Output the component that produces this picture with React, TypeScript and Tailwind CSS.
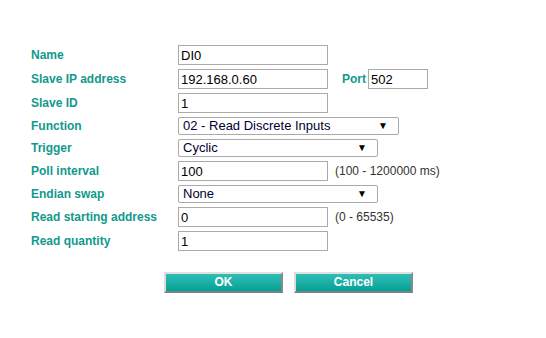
import React from "react";

const labelCls = "w-[147px] shrink-0 text-[12px] font-bold text-[#11998c]";
const inputCls =
  "h-[20px] border border-[#a9a9a9] bg-white px-[2px] text-[13px] text-black outline-none";

function TextRow({ label, value, hint }: { label: string; value: string; hint?: string }) {
  return (
    <div className="flex h-[24px] items-start">
      <div className={`${labelCls} pt-[1px]`}>{label}</div>
      <input className={`${inputCls} w-[150px]`} defaultValue={value} readOnly />
      {hint && <span className="ml-[7px] pt-[1px] text-[12px] text-[#333]">{hint}</span>}
    </div>
  );
}

function SelectRow({ label, value, width }: { label: string; value: string; width: string }) {
  return (
    <div className="flex h-[22px] items-start">
      <div className={`${labelCls} pt-0`}>{label}</div>
      <div className={`relative h-[18px] ${width} rounded-[2px] border border-[#a9a9a9] bg-white`}>
        <span className="absolute left-[4px] top-0 text-[13px] leading-[16px] text-[#000033]">{value}</span>
        <span className="absolute right-[10px] top-[3px] text-[10px] leading-[10px] text-black">▼</span>
      </div>
    </div>
  );
}

function Button({ children }: { children: React.ReactNode }) {
  return (
    <button className="h-[21px] w-[119px] border-t-2 border-l-2 border-b-2 border-r-2 border-t-[#e0e0e0] border-l-[#dcdcdc] border-b-[#7f7f7f] border-r-[#8a8a8a] bg-gradient-to-b from-[#2dbfb5] to-[#00a096] text-[12px] font-bold leading-[17px] text-white">
      {children}
    </button>
  );
}

export default function App() {
  return (
    <div
      className="h-[338px] w-[546px] bg-white pl-[31px] pt-[45px]"
      style={{ fontFamily: '"Liberation Sans", Arial, sans-serif' }}
    >
      <TextRow label="Name" value="DI0" />
      <div className="flex h-[24px] items-start">
        <div className={`${labelCls} pt-[1px]`}>Slave IP address</div>
        <input className={`${inputCls} w-[150px]`} defaultValue="192.168.0.60" readOnly />
        <span className="ml-[14px] mr-[2px] pt-[1px] text-[12px] font-bold text-[#11998c]">Port</span>
        <input className={`${inputCls} w-[60px]`} defaultValue="502" readOnly />
      </div>
      <TextRow label="Slave ID" value="1" />
      <SelectRow label="Function" value="02 - Read Discrete Inputs" width="w-[221px]" />
      <SelectRow label="Trigger" value="Cyclic" width="w-[200px]" />
      <TextRow label="Poll interval" value="100" hint="(100 - 1200000 ms)" />
      <SelectRow label="Endian swap" value="None" width="w-[200px]" />
      <TextRow label="Read starting address" value="0" hint="(0 - 65535)" />
      <TextRow label="Read quantity" value="1" />
      <div className="mt-[17px] flex gap-[11px] pl-[133px]">
        <Button>OK</Button>
        <Button>Cancel</Button>
      </div>
    </div>
  );
}
